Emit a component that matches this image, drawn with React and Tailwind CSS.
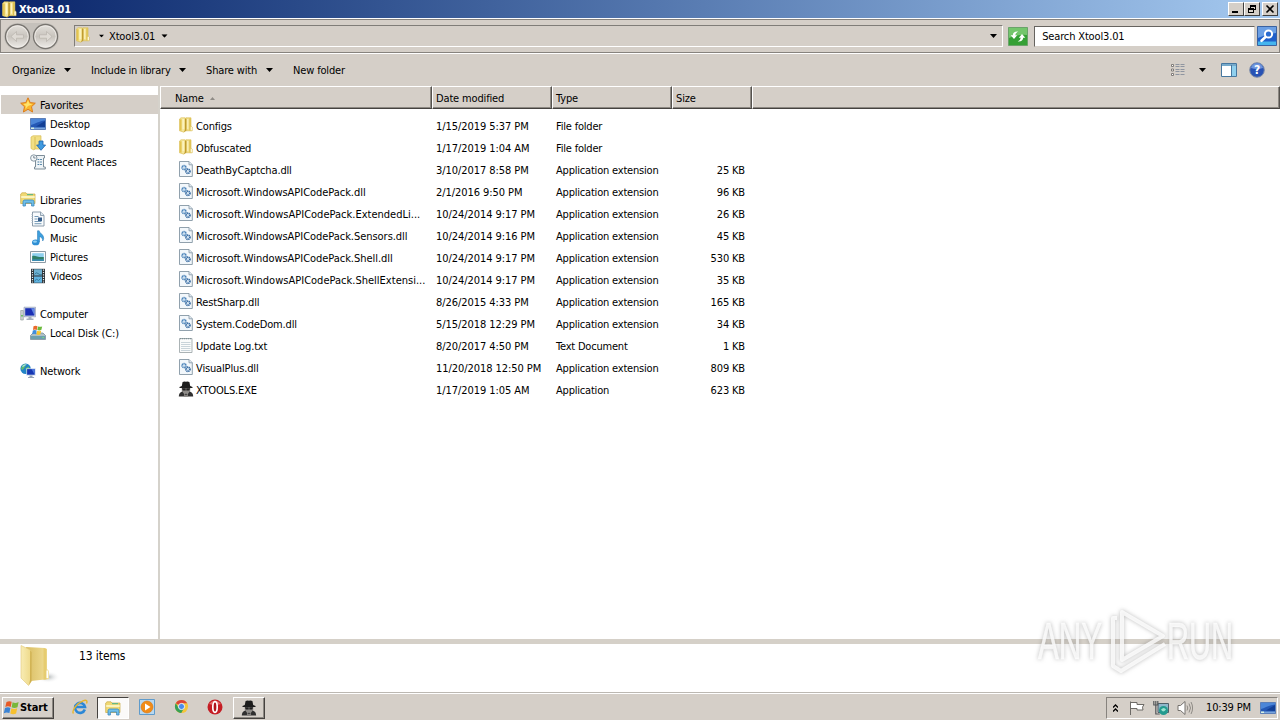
function FolderIcon({ className = 'h-4 w-4' }) {
  return (
    <svg className={className} viewBox="0 0 16 16">
      <path d="M7 2 L8 .8 H13 V9 L14.2 10 V13.8 H7 Z" fill="#f0dc86" stroke="#d6b94c" strokeWidth=".6" />
      <path d="M11.3 1.2h1.5v12.2h-1.500z" fill="#dcc050" />
      <path d="M1.500 2 L3 .8 H7.200 V13.500 L6 15.200 L1.500 13.800 Z" fill="#f5e79c" stroke="#d6b94c" strokeWidth=".6" />
      <path d="M1.800 2.300h1.800v11.500l-1.800-.3z" fill="#e3c450" />
      <path d="M7 1.800 H8.400 V13.500 L6.200 15.200 L7 12z" fill="#bf9c30" />
      <path d="M4.600 2h1.200v10h-1.200zM9.300 2h1v10h-1z" fill="#fdf6c8" />
      <path d="M12.700 9.800h1.100v3.500h-1.100z" fill="#fffdf0" />
    </svg>
  );
}

function BigFolder() {
  return (
    <svg className="h-11 w-10" viewBox="0 0 40 44">
      <defs>
        <linearGradient id="bf1" x1="0" x2="1"><stop offset="0" stopColor="#f8ecb4" /><stop offset="1" stopColor="#eed988" /></linearGradient>
        <linearGradient id="bf2" x1="0" x2="1"><stop offset="0" stopColor="#d9bd62" /><stop offset="1" stopColor="#f2e09a" /></linearGradient>
        <radialGradient id="bf3"><stop offset="0" stopColor="#8d9496" stopOpacity=".7" /><stop offset="1" stopColor="#fff" stopOpacity="0" /></radialGradient>
      </defs>
      <ellipse cx="28" cy="33" rx="12" ry="6" fill="url(#bf3)" />
      <path d="M6 3 L25 4 L27 5 V25 L29 27 V35 L11 37z" fill="url(#bf2)" />
      <path d="M23.500 4 L26.500 5 V35.400 L23.500 35.700z" fill="#e6cc70" />
      <path d="M1 1.500 L9.500 5.500 L11.300 8 V37 L8.500 41.500 L1 34z" fill="url(#bf1)" stroke="#e0c878" strokeWidth=".6" />
      <path d="M10.200 6.500 L11.600 8 V37 L9 41 L10 36z" fill="#cfb050" />
      <path d="M26.500 26.500h1.700v7.500h-1.700z" fill="#fff" />
    </svg>
  );
}

function Star() {
  return (
    <svg className="h-4 w-4" viewBox="0 0 16 16">
      <path d="M8 .8 L10.200 5.600 L15.300 6.200 L11.500 9.700 L12.600 15 L8 12.300 L3.400 15 L4.500 9.700 L.7 6.200 L5.800 5.600z" fill="#fbb52c" stroke="#dc7c1c" strokeWidth="1" />
      <path d="M8 3 L9.300 6.600 L12.500 7.200 L8 9 L5.500 12 L5.800 9 L3.500 7 L6.600 6.600z" fill="#ffe36b" />
    </svg>
  );
}

function DesktopIcon() {
  return (
    <svg className="h-4 w-4" viewBox="0 0 16 16">
      <path d="M.5 2.5h15v11H.5z" fill="#2458b5" stroke="#5c7fb8" />
      <path d="M1 3h14v1.5C9 5 5 8 1 9z" fill="#4c86d8" />
      <path d="M6 10.500 L15 5v6z" fill="#123f95" />
      <path d="M1 11.500h14v1.500H1z" fill="#79a5dd" />
      <path d="M1 11.500h3v1.500H1z" fill="#d6f0df" />
    </svg>
  );
}

function DownloadsIcon() {
  return (
    <svg className="h-4 w-4" viewBox="0 0 16 16">
      <path d="M1 2 L3 .8 H11 V14 H5 L4 15 L1 13.500z" fill="#f2df84" stroke="#d8bd58" strokeWidth=".7" />
      <path d="M5 2v12" stroke="#d9be56" />
      <path d="M9 6h4v4h2.600L11 15.300 6.600 10H9z" fill="#3f9ae0" stroke="#1e65ad" strokeWidth=".8" />
    </svg>
  );
}

function RecentIcon() {
  return (
    <svg className="h-4 w-4" viewBox="0 0 16 16">
      <path d="M5.500 1.500h9v2.500H13.500V13h1.800v2H4.500v-2H5.500z" fill="#eef3f6" stroke="#7d8d98" />
      <path d="M7.500 5.500h4.500M7.500 8h4.500M7.500 10.500h4.500" stroke="#4f83a6" strokeWidth="1.200" strokeDasharray="1.800 .8" />
      <circle cx="3.800" cy="4" r="3.200" fill="#f4f8fa" stroke="#8796a1" />
      <path d="M3.800 2v2h1.800" fill="none" stroke="#5a6b77" strokeWidth=".8" />
    </svg>
  );
}

function LibrariesIcon({ className = 'h-4 w-4' }) {
  return (
    <svg className={className} viewBox="0 0 16 16">
      <path d="M.7 3 L2 1.800h4l1 1.200h8v9.500H.7z" fill="#f0d974" stroke="#c9a945" strokeWidth=".7" />
      <path d="M1.200 5h13.500v2H1.200z" fill="#fbf3bd" />
      <path d="M7 3h6v1.200H7z" fill="#65b886" />
      <path d="M3 15v-4.200c0-1.200.7-1.800 1.800-1.800h7.400c1.100 0 1.800.6 1.800 1.800V15h-2.400v-3H5.400v3z" fill="#71c0e8" stroke="#3a87bd" strokeWidth=".8" />
    </svg>
  );
}

function DocumentsIcon() {
  return (
    <svg className="h-4 w-4" viewBox="0 0 16 16">
      <path d="M2.500 1h8L14 4.300V15H2.500z" fill="#f8fbfd" stroke="#7f91a1" strokeWidth=".9" />
      <path d="M10.500 1v3.500H14" fill="#dbe7ef" stroke="#7f91a1" strokeWidth=".8" />
      <path d="M4.500 5.500h4M4.500 8h3M4.500 10.500h7M4.500 12.700h7" stroke="#7599b6" />
      <path d="M8 6.500h4V10H8z" fill="#355c8a" />
      <path d="M2 3v10" stroke="#b0bfcb" strokeDasharray="1 1" />
    </svg>
  );
}

function MusicIcon() {
  return (
    <svg className="h-4 w-4" viewBox="0 0 16 16">
      <path d="M7.500.8h1.700c.4 2.600 4.500 3.600 4.500 7.400 0 1-.4 2-1 2.800.2-2.800-1.500-3.800-3.200-4.600V12H7.500z" fill="#3d9fdd" stroke="#2174b5" strokeWidth=".5" />
      <ellipse cx="5.700" cy="12.400" rx="3.700" ry="2.900" fill="#2f8fd4" />
      <ellipse cx="5" cy="11.600" rx="2" ry="1.200" fill="#8fd0f3" />
    </svg>
  );
}

function PicturesIcon() {
  return (
    <svg className="h-4 w-4" viewBox="0 0 16 16">
      <path d="M.5 2.500h15v11H.5z" fill="#fafcfd" stroke="#8d9ba5" />
      <path d="M2.200 4.200h11.600v7.600H2.200z" fill="#8ed0ee" />
      <path d="M2.200 7c3-1.200 5 1.500 11.600 1v4H2.200z" fill="#2f8068" />
      <path d="M2.200 10.400h11.600v1.400H2.200z" fill="#3d8fc3" />
    </svg>
  );
}

function VideosIcon() {
  return (
    <svg className="h-4 w-4" viewBox="0 0 16 16">
      <path d="M1 .8h14v14.400H1z" fill="#2c3338" />
      <path d="M4 1.300h8v6.200H4z" fill="#6db0d0" />
      <path d="M4 8.500h8v6.200H4z" fill="#60b3e0" />
      <path d="M4.500 6.500q1.500-3 3.500-1t4 1M4.500 13.500l2-2.500 2 1.500 2-2" stroke="#2f7191" strokeWidth=".8" fill="none" />
      <path d="M2.500 1.500v13M13.500 1.500v13" stroke="#e7edf0" strokeWidth="1.200" strokeDasharray="1.200 1.200" />
    </svg>
  );
}

function ComputerIcon() {
  return (
    <svg className="h-4 w-4" viewBox="0 0 16 16">
      <path d="M.7 4.500h2.600v9.500H.7z" fill="#cfd4d4" stroke="#8b9492" strokeWidth=".6" />
      <path d="M1.200 9h1.600v1.500H1.200z" fill="#58bd4c" />
      <path d="M4 1.200h11.600v9.600H4z" fill="#d0d7e6" stroke="#8492ad" strokeWidth=".6" />
      <path d="M5.200 2.200h9.200v7.400H5.200z" fill="#1b2fb4" />
      <path d="M11 2.200h3.400v7.400z" fill="#6288e2" />
      <path d="M8.500 10.800h3v1.700h2V14h-7v-1.500h2z" fill="#a5aebd" />
    </svg>
  );
}

function DiskIcon() {
  return (
    <svg className="h-4 w-4" viewBox="0 0 16 16">
      <path d="M.5 10.500 L3 8h10l2.500 2.500v4H.5z" fill="#aebfc7" stroke="#6f8490" strokeWidth=".7" />
      <path d="M1 11h14v3H1z" fill="#6c9fae" />
      <path d="M3.500 1.200q2-1 4 0L6.800 5q-2-.9-3.800 0z" fill="#ea6a2c" />
      <path d="M8 1.400q2 .9 4.200 0L11.300 5q-2 .9-4 .1z" fill="#6cba3c" />
      <path d="M2.800 5.500q2-1 3.900 0L6 9.200q-2-.9-3.800 0z" fill="#3e8ddd" />
      <path d="M7.200 5.700q2 .9 4 0L10.400 9.400q-2 .9-4 .1z" fill="#f7c52f" />
      <path d="M12.500 12h1.300v1h-1.300z" fill="#7dea6a" />
    </svg>
  );
}

function NetworkIcon() {
  return (
    <svg className="h-4 w-4" viewBox="0 0 16 16">
      <circle cx="5.600" cy="5.800" r="5.200" fill="#2384c6" />
      <path d="M2 3c2-2 3.500-1.800 4-1.300L4.500 4.500 2.600 7 1 6zM5.500 5.500l3-2 1.500 3L7 9z" fill="#60bd6d" />
      <path d="M2 3.200Q4 .9 7 1.300L3 4z" fill="#aae0e6" />
      <path d="M6.300 5.300h9.200v7.200H6.300z" fill="#c4d3ea" />
      <path d="M7.100 6.100h7.600v5.600H7.100z" fill="#1636b2" />
      <path d="M11.500 6.100h3.200v5.600z" fill="#4d78dc" />
      <path d="M9.500 12.500h3v1.400h1.600V15H8v-1.100h1.500z" fill="#98a5b7" />
    </svg>
  );
}

function DllIcon() {
  return (
    <svg className="h-4 w-4" viewBox="0 0 16 16">
      <path d="M1.500.5h9.500L14.300 3.800v11.700H1.500z" fill="#f2f7fb" stroke="#8496a4" strokeWidth=".9" />
      <path d="M11 .5v3.300h3.300" fill="#dfe8ee" stroke="#8496a4" strokeWidth=".8" />
      <circle cx="6" cy="6.600" r="2" fill="#cfe1f1" stroke="#4a82b8" strokeWidth="1.600" strokeDasharray="1.100 .5" />
      <circle cx="9.900" cy="10.200" r="2.100" fill="#cfe1f1" stroke="#33679f" strokeWidth="1.700" strokeDasharray="1.100 .5" />
    </svg>
  );
}

function TxtIcon() {
  return (
    <svg className="h-4 w-4" viewBox="0 0 16 16">
      <path d="M1.500 1.500h12.500v14H1.500z" fill="#fafbfb" stroke="#a2aaad" strokeWidth=".9" />
      <path d="M2 1.600h12" stroke="#7f9096" strokeWidth="1.400" strokeDasharray="1.200 .8" />
      <path d="M3 5.500h9.500M3 7.500h9.500M3 9.500h9.500M3 11.500h9.500M3 13.500h9.500" stroke="#c3cfd6" strokeWidth=".9" />
    </svg>
  );
}

function SpyIcon({ className = 'h-4 w-4' }) {
  return (
    <svg className={className} viewBox="0 0 16 16">
      <path d="M3.800 5 L4.600 1 Q6.500 0 8 .8 Q9.500 0 11.400 1 L12.200 5 L14.500 6v1h-13V6z" fill="#1c1c1c" />
      <path d="M3.800 7h8.400v3.500L9.500 13h-3L3.800 10.500z" fill="#8e8b88" />
      <path d="M3.800 7.300h3.900v2.300H4.800zM8.300 7.300h3.900l-1 2.300H8.300z" fill="#1f1f1f" />
      <path d="M.8 15.500Q.8 11.500 4.300 10.500l2.500 2.900L8 12.600l1.200.8 2.500-2.900Q15.200 11.500 15.200 15.500z" fill="#303030" />
      <path d="M6.300 13l1.700 1.200L9.700 13l.6 2.500H5.700z" fill="#85827f" />
    </svg>
  );
}

function WinFlag() {
  return (
    <svg className="h-4 w-[17px] shrink-0" viewBox="0 0 17 16">
      <path d="M3.500 2q2.800-1.600 5.200-.2L7.700 7Q5 5.600 2.300 7z" fill="#e75a26" />
      <path d="M9.600 2.300q2.800 1.400 6-.3L14.500 7.200q-3 1.500-5.900.1z" fill="#78b73a" />
      <path d="M2 8q2.800-1.400 5.400-.1l-1 5.200Q3.800 11.800.8 13.200z" fill="#3b83d4" />
      <path d="M8.400 8.300q2.800 1.200 5.800 0L13.100 13.600q-3 1.300-5.800 0z" fill="#f6c02e" />
    </svg>
  );
}

function Caret({ className = '' }) {
  return <svg className={`h-1 w-[7px] shrink-0 ${className}`} viewBox="0 0 7 4"><path d="M0 0h7L3.500 4z" fill="#000" /></svg>;
}

function NavButton({ flip }) {
  return (
    <svg className="h-[27px] w-[27px]" viewBox="0 0 27 27">
      <defs><linearGradient id="nb" x1="0" x2="0" y1="0" y2="1"><stop offset="0" stopColor="#e4e1dc" /><stop offset=".5" stopColor="#c8c4bd" /><stop offset="1" stopColor="#efedea" /></linearGradient></defs>
      <circle cx="13.500" cy="13.500" r="12" fill="url(#nb)" stroke="#77746f" strokeWidth="1.300" />
      <circle cx="13.500" cy="13.500" r="10.700" fill="none" stroke="#efece8" strokeWidth=".9" />
      <path d="M7 13.500l5.500-5v3.300h7v3.400h-7v3.300z" fill="#dedad4" stroke="#b7b3ac" strokeWidth=".7" transform={flip ? 'rotate(180 13.5 13.5)' : undefined} />
    </svg>
  );
}

function RefreshIcon() {
  return (
    <svg className="h-[19px] w-[20px]" viewBox="0 0 20 19">
      <path d="M.5.5h19v18H.5z" fill="#35a035" stroke="#6aa36a" />
      <path d="M1 1h18v7Q10 7 1 11z" fill="#74c66c" />
      <path d="M2.700 8.200L6 12l3.200-3.800H7.200Q7.300 6 10.300 4.600Q5 4.200 4.800 8.200z" fill="#fff" />
      <path d="M17.300 10.800L14 7l-3.200 3.800h2Q12.700 13 9.700 14.400Q15 14.800 15.200 10.800z" fill="#fff" />
    </svg>
  );
}

function SearchIcon() {
  return (
    <svg className="h-5 w-5" viewBox="0 0 20 20">
      <path d="M.5.500h19v19H.5z" fill="#1f5fca" stroke="#3b62a0" />
      <path d="M1 1h18v6Q10 8 1 12z" fill="#6b9fe4" />
      <path d="M1 15.500h18v3.500H1z" fill="#45b5ee" />
      <path d="M9 10.500L4.500 14.800" stroke="#fff" strokeWidth="2.600" strokeLinecap="round" />
      <circle cx="11.500" cy="8" r="3.600" fill="#2a6bd0" stroke="#fff" strokeWidth="2" />
    </svg>
  );
}

function WindowButton({ children }) {
  return (
    <div className="flex h-[14px] w-4 items-center justify-center border border-t-white border-r-[#404040] border-b-[#404040] border-l-white bg-[#d5cfc8]">
      <svg className="h-[10px] w-3" viewBox="0 0 12 10" fill="none" stroke="#000" shapeRendering="crispEdges">{children}</svg>
    </div>
  );
}

const nav = [
  ['Favorites', Star, 0],
  ['Desktop', DesktopIcon, 1],
  ['Downloads', DownloadsIcon, 1],
  ['Recent Places', RecentIcon, 1],
  null,
  ['Libraries', LibrariesIcon, 0],
  ['Documents', DocumentsIcon, 1],
  ['Music', MusicIcon, 1],
  ['Pictures', PicturesIcon, 1],
  ['Videos', VideosIcon, 1],
  null,
  ['Computer', ComputerIcon, 0],
  ['Local Disk (C:)', DiskIcon, 1],
  null,
  ['Network', NetworkIcon, 0],
];

const EXT = 'Application extension';
const files = [
  [FolderIcon, 'Configs', '1/15/2019 5:37 PM', 'File folder', ''],
  [FolderIcon, 'Obfuscated', '1/17/2019 1:04 AM', 'File folder', ''],
  [DllIcon, 'DeathByCaptcha.dll', '3/10/2017 8:58 PM', EXT, '25 KB'],
  [DllIcon, 'Microsoft.WindowsAPICodePack.dll', '2/1/2016 9:50 PM', EXT, '96 KB'],
  [DllIcon, 'Microsoft.WindowsAPICodePack.ExtendedLi...', '10/24/2014 9:17 PM', EXT, '26 KB'],
  [DllIcon, 'Microsoft.WindowsAPICodePack.Sensors.dll', '10/24/2014 9:16 PM', EXT, '45 KB'],
  [DllIcon, 'Microsoft.WindowsAPICodePack.Shell.dll', '10/24/2014 9:17 PM', EXT, '530 KB'],
  [DllIcon, 'Microsoft.WindowsAPICodePack.ShellExtensi...', '10/24/2014 9:17 PM', EXT, '35 KB'],
  [DllIcon, 'RestSharp.dll', '8/26/2015 4:33 PM', EXT, '165 KB'],
  [DllIcon, 'System.CodeDom.dll', '5/15/2018 12:29 PM', EXT, '34 KB'],
  [TxtIcon, 'Update Log.txt', '8/20/2017 4:50 PM', 'Text Document', '1 KB'],
  [DllIcon, 'VisualPlus.dll', '11/20/2018 12:50 PM', EXT, '809 KB'],
  [SpyIcon, 'XTOOLS.EXE', '1/17/2019 1:05 AM', 'Application', '623 KB'],
];

const headCell = 'flex h-[23px] items-center border border-t-white border-l-white border-r-[#55524e] border-b-[#45423f] pt-px shadow-[inset_-1px_-1px_0_#8c8882]';

function nameTracking(name) {
  if (name.endsWith('...')) return 'tracking-[0.01px]';
  return name.startsWith('Microsoft') ? 'tracking-[-0.04px]' : 'tracking-[-0.15px]';
}

function Watermark() {
  return (
    <div className="absolute top-[600px] left-[1026px]">
      <svg className="h-20 w-[220px] overflow-visible drop-shadow-[0_0_2px_rgba(90,90,90,0.5)]" viewBox="0 0 220 80">
        <g fill="none" stroke="#fff" strokeOpacity=".8" strokeWidth="4" strokeLinejoin="round">
          <path d="M96 12 L137 36 L96 60z" />
          <path d="M91 18H87V66L95 71L139 44" />
        </g>
        <g fill="#fff" fillOpacity=".8" stroke="#fff" strokeOpacity=".5" strokeWidth=".8" fontFamily="Liberation Sans Narrow, Liberation Sans, sans-serif" fontSize="51">
          <text x="12" y="59" textLength="64" lengthAdjust="spacingAndGlyphs">ANY</text>
          <text x="141" y="59" textLength="66" lengthAdjust="spacingAndGlyphs">RUN</text>
        </g>
      </svg>
    </div>
  );
}

export default function App() {
  return (
    <div className="relative flex h-[720px] w-[1280px] flex-col overflow-hidden bg-[#d5cfc8] font-['DejaVu_Sans_Condensed','DejaVu_Sans',sans-serif] text-[11px] leading-[13px] tracking-[-0.15px] whitespace-pre text-black">
      <header className="flex h-[18px] shrink-0 items-center bg-linear-to-r from-[#0a246a] to-[#a6caf0] pr-0.5 pl-px">
        <FolderIcon className="h-[17px] w-[17px]" />
        <span className="ml-px font-bold tracking-[-0.2px] text-white">Xtool3.01</span>
        <div className="ml-auto flex">
          <WindowButton><path d="M2 8h6" strokeWidth="2" /></WindowButton>
          <WindowButton><path d="M4 1.500h6M4.500 1v3M9.500 1v5M7 5.500h3M2 4.500h6M2 5.500h6M2.500 4v5M7.500 4v5M2 8.500h6M4 2.500h6" /></WindowButton>
          <div className="ml-0.5"><WindowButton><path d="M2.500 1.500l7 7M9.500 1.500l-7 7" strokeWidth="1.600" shapeRendering="auto" /></WindowButton></div>
        </div>
      </header>

      <div className="flex h-9 shrink-0 items-center border-t border-b border-t-white border-b-white">
        <div className="flex h-[34px] w-full items-center border border-[#87837e] pr-0.5 pl-[3px]">
          <div className="flex gap-px rounded-full bg-[#c5c1bb]"><NavButton /><NavButton flip /></div>
          <div className="ml-[15px] flex h-[22px] w-[930px] items-center border border-t-[#807d78] border-r-white border-b-white border-l-[#807d78]">
            <FolderIcon className="-mt-0.5 h-4 w-4" />
            <Caret className="ml-[7px] scale-75" />
            <span className="ml-1">Xtool3.01</span>
            <Caret className="ml-1.5 scale-90" />
            <Caret className="mr-[5px] ml-auto" />
          </div>
          <div className="ml-[5px] flex h-[22px] w-6 items-center"><RefreshIcon /></div>
          <div className="ml-[2px] flex h-[21px] w-[221px] items-center border border-t-[#66635f] border-r-[#d5cfc8] border-b-[#d5cfc8] border-l-[#66635f] bg-white pt-px pl-[7px]">Search Xtool3.01</div>
          <div className="ml-0.5"><SearchIcon /></div>
        </div>
      </div>

      <div className="flex h-8 shrink-0 items-center pl-3">
        <span className="w-[52px]">Organize</span><Caret />
        <span className="ml-5 w-[88px] tracking-[-0.2px]">Include in library</span><Caret />
        <span className="ml-5 w-[60px]">Share with</span><Caret />
        <span className="ml-5">New folder</span>
        <div className="mr-[15px] ml-auto flex items-center">
          <svg className="h-4 w-4" viewBox="0 0 16 16"><path d="M1.500 2.500h2v2h-2zM1.500 7h2v2h-2zM1.500 11.500h2v2h-2z" fill="#fff" stroke="#74716d" strokeWidth=".9" /><path d="M5.500 2.500h10M5.500 4.500h10M5.500 7.500h10M5.500 9.500h10M5.500 12.500h10" stroke="#7c8796" strokeWidth=".8" strokeDasharray="4 1" /></svg>
          <Caret className="ml-[13px]" />
          <svg className="ml-[15px] h-4 w-4" viewBox="0 0 16 16"><path d="M.5 1.500h15v13H.5z" fill="#fff" stroke="#46779f" /><path d="M1 2h14v2H1z" fill="#76aacb" /><path d="M11 4h4v10h-4z" fill="#8fd0ee" /><path d="M10.500 3v11" stroke="#46779f" /></svg>
          <svg className="ml-3 h-4 w-4" viewBox="0 0 16 16"><circle cx="8" cy="8" r="7.300" fill="#2852b4" stroke="#7d8ca9" /><path d="M2 6a6.200 6.200 0 0 1 12 0Q8 8 2 6z" fill="#6d95dd" /><text x="8" y="12.300" textAnchor="middle" fill="#fff" fontSize="12" fontWeight="bold">?</text></svg>
        </div>
      </div>

      <div className="flex h-[553px] shrink-0">
        <nav className="h-full w-[158px] bg-white pt-[9px]">
          {nav.map((n, i) => {
            if (!n) return <div key={i} className="h-[19px]" />;
            const [label, Icon, depth] = n;
            return (
              <div key={label} className={`ml-px flex h-[19px] items-center gap-1 ${i === 0 ? 'bg-[#d5cfc8]' : ''} ${depth ? 'pl-[29px]' : 'pl-[19px]'}`}>
                <Icon className="mb-px h-4 w-4" />
                <span className="pt-[2px]">{label}</span>
              </div>
            );
          })}
        </nav>
        <div className="h-full w-[2px] bg-[#d5d2cb]" />
        <main className="h-full w-[1120px] bg-white">
          <div className="flex bg-[#d5cfc8]">
            <div className={`${headCell} w-[272px] pl-3.5`}>Name<svg className="ml-1.5 h-[3px] w-[5px]" viewBox="0 0 5 3"><path d="M0 3h5L2.500 0z" fill="#8f8b86" /></svg></div>
            <div className={`${headCell} w-[120px] pl-[3px]`}>Date modified</div>
            <div className={`${headCell} w-[120px] pl-[3px]`}>Type</div>
            <div className={`${headCell} w-[80px] pl-[3px]`}>Size</div>
            <div className={`${headCell} flex-1`} />
          </div>
          <div className="flex flex-col pt-[6px]">
            {files.map(([Icon, name, date, type, size]) => (
              <div key={name} className="flex h-[22px] items-center pl-[18px]">
                <div className="pb-[2px]"><Icon /></div>
                <span className={`ml-0.5 w-[240px] ${nameTracking(name)}`}>{name}</span>
                <span className="w-[120px] tracking-[-0.06px]">{date}</span>
                <span className="w-[120px] tracking-[-0.2px]">{type}</span>
                <span className="w-[69px] text-right">{size}</span>
              </div>
            ))}
          </div>
        </main>
      </div>

      <div className="h-[5px] shrink-0 bg-[#d5d0c8]" />
      <div className="flex h-12 shrink-0 bg-white pl-5">
        <BigFolder />
        <span className="mt-1.5 ml-[19px] text-[12px] tracking-[-0.1px]">13 items</span>
      </div>

      <footer className="flex h-7 shrink-0 items-center border-t border-t-[#bcb8b2] pl-0.5 shadow-[inset_0_1px_0_#fff]">
        <div className="mt-0.5 flex h-[22px] w-[52px] items-center border border-t-white border-r-[#45423f] border-b-[#45423f] border-l-white font-bold tracking-[-0.1px] shadow-[inset_-1px_-1px_0_#8c8882]"><WinFlag /><span>Start</span></div>
        <div className="ml-[10px] flex h-6 w-8 items-center justify-center">
          <svg className="h-4 w-4" viewBox="0 0 16 16"><path d="M12.800 10.500A5 5 0 1 1 13 8H4" fill="none" stroke="#2b87d6" strokeWidth="2.600" /><path d="M1.500 14.500C-.8 12 5 4 11 1.800c4-1.500 4.500.6 3.500 2.700" fill="none" stroke="#e6b52d" strokeWidth="1.400" /></svg>
        </div>
        <div className="mt-0.5 ml-px flex h-[22px] w-8 items-center justify-center border border-t-[#45423f] border-r-white border-b-white border-l-[#45423f] bg-[#fbfaf9]"><LibrariesIcon /></div>
        <div className="ml-[2px] flex h-6 w-8 items-center justify-center">
          <svg className="h-4 w-4" viewBox="0 0 16 16"><path d="M.5.500h15v15H.5z" fill="#b8d8f0" stroke="#5f9bcb" /><circle cx="8" cy="8" r="6" fill="#f18b17" stroke="#d77612" strokeWidth=".6" /><path d="M6 4.500v7L11.500 8z" fill="#fff" /></svg>
        </div>
        <div className="ml-[2px] flex h-6 w-8 items-center justify-center">
          <svg className="h-[15px] w-[15px]" viewBox="0 0 16 16"><circle cx="8" cy="8" r="7" fill="#f4c53a" /><path d="M8 8L1.900 4.500A7 7 0 0 1 14.100 4.600H8z" fill="#dc4437" /><path d="M1.900 4.500A7 7 0 0 0 7.700 15L10.800 9.700 8 8 5 9.600z" fill="#37a057" /><circle cx="8" cy="8" r="3.300" fill="#4b8bea" stroke="#fff" strokeWidth=".9" /></svg>
        </div>
        <div className="ml-[2px] flex h-6 w-8 items-center justify-center">
          <svg className="h-4 w-4" viewBox="0 0 16 16"><circle cx="8" cy="8" r="7.500" fill="#c51d24" /><path d="M2 5Q8-2 14 5 8 7 2 5z" fill="#e56a69" /><ellipse cx="8" cy="8" rx="2.200" ry="5.300" fill="#b0141b" stroke="#fff" strokeWidth="1.700" /></svg>
        </div>
        <div className="mt-0.5 ml-0.5 flex h-[22px] w-8 items-center justify-center border border-t-white border-r-[#45423f] border-b-[#45423f] border-l-white shadow-[inset_-1px_-1px_0_#8c8882]"><SpyIcon /></div>

        <div className="mt-0.5 mr-[2px] ml-auto flex h-[22px] w-[172px] items-center border border-t-[#87837e] border-r-white border-b-white border-l-[#87837e] pl-1.5">
          <svg className="h-2 w-[5px]" viewBox="0 0 5 8"><path d="M0 3.500L2.500 1 5 3.500M0 7.500L2.500 5 5 7.500" fill="none" stroke="#000" strokeWidth="1.300" /></svg>
          <svg className="ml-[11px] h-4 w-4" viewBox="0 0 16 16"><path d="M1.500 15V1.500M1.500 2.500h6.500v2h7q-2.500 2.500-1 5.500h-6v-1.500h-6.500" fill="#fff" stroke="#6d6a66" /></svg>
          <svg className="ml-2 h-4 w-4" viewBox="0 0 16 16"><path d="M5 3.500h10.500v9H5z" fill="#8eb7ca" stroke="#4f5f69" /><path d="M.8 1v4h4V1M2.800 1v13h4" fill="none" stroke="#55585a" strokeWidth="1.200" /><circle cx="10.500" cy="10.500" r="4.500" fill="#239b8f" /><path d="M8 9.500q3-3 5 0-3 4-5 0z" fill="#9be2d0" /></svg>
          <svg className="ml-2 h-4 w-4" viewBox="0 0 16 16"><path d="M1 5.500h2.500L8 1.500v13l-4.500-4H1z" fill="#fff" stroke="#74716d" /><path d="M10 5.500q1.500 2.500 0 5M12 3.500q3 4.500 0 9M14 2q3.200 6 0 12" fill="none" stroke="#86827d" strokeWidth=".9" /></svg>
          <span className="ml-[13px] w-[54px]">10:39 PM</span>
          <DesktopIcon />
        </div>
      </footer>
      <Watermark />
    </div>
  );
}
